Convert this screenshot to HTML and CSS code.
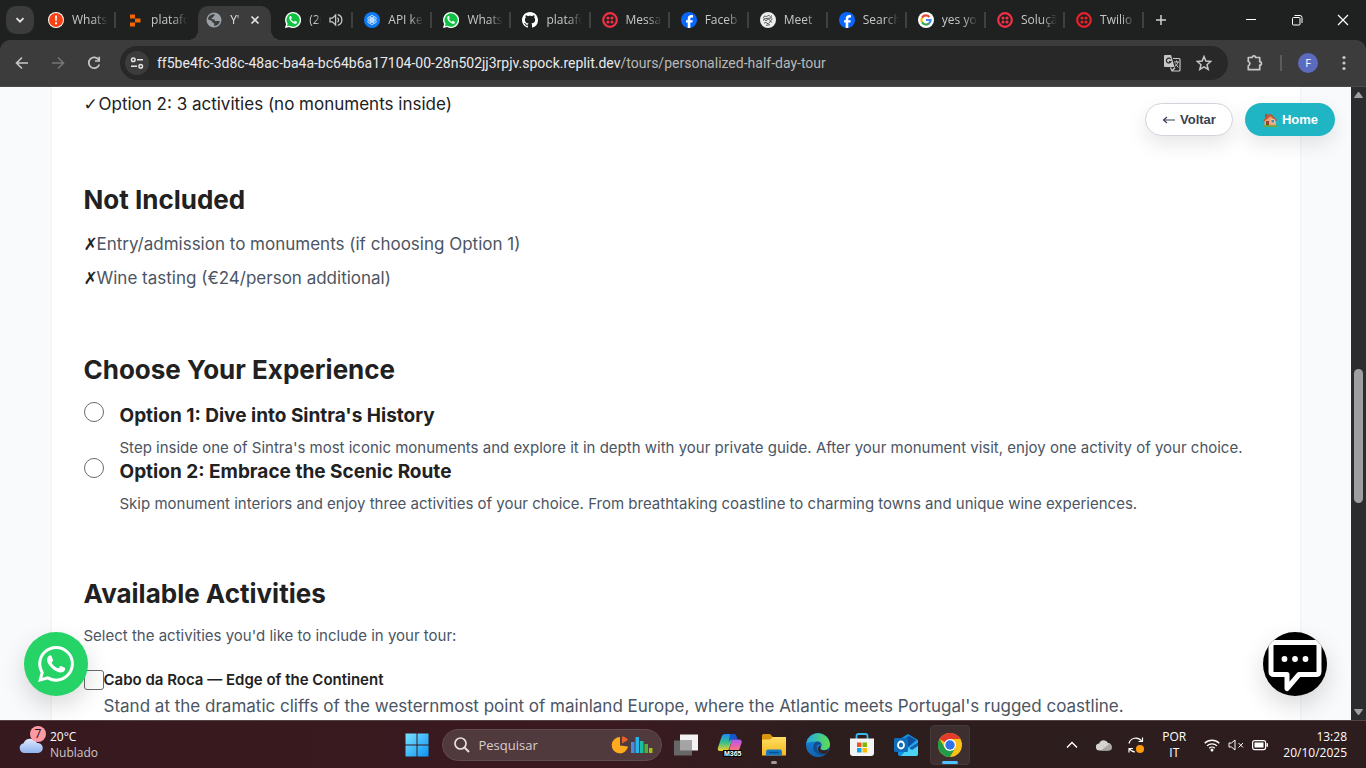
FILE: index.html
```html
<!DOCTYPE html>
<html lang="en">
<head>
<meta charset="utf-8">
<title>Your Sintra Tour</title>
<link rel="stylesheet" href="styles.css">
</head>
<body>
<svg class="defs" aria-hidden="true">
  <defs>
    <symbol id="wa" viewBox="0 0 24 24"><path d="M17.472 14.382c-.297-.149-1.758-.867-2.03-.967-.273-.099-.471-.148-.67.15-.197.297-.767.966-.94 1.164-.173.199-.347.223-.644.075-.297-.15-1.255-.463-2.39-1.475-.883-.788-1.48-1.761-1.653-2.059-.173-.297-.018-.458.13-.606.134-.133.298-.347.446-.52.149-.174.198-.298.298-.497.099-.198.05-.371-.025-.52-.075-.149-.669-1.612-.916-2.207-.242-.579-.487-.5-.669-.51-.173-.008-.371-.01-.57-.01-.198 0-.52.074-.792.372-.272.297-1.04 1.016-1.04 2.479 0 1.462 1.065 2.875 1.213 3.074.149.198 2.096 3.2 5.077 4.487.709.306 1.262.489 1.694.625.712.227 1.36.195 1.871.118.571-.085 1.758-.719 2.006-1.413.248-.694.248-1.289.173-1.413-.074-.124-.272-.198-.57-.347m-5.421 7.403h-.004a9.87 9.87 0 01-5.031-1.378l-.361-.214-3.741.982.998-3.648-.235-.374a9.86 9.86 0 01-1.51-5.26c.001-5.45 4.436-9.884 9.888-9.884 2.64 0 5.122 1.03 6.988 2.898a9.825 9.825 0 012.893 6.994c-.003 5.45-4.437 9.884-9.885 9.884m8.413-18.297A11.815 11.815 0 0012.05 0C5.495 0 .16 5.335.157 11.892c0 2.096.547 4.142 1.588 5.945L.057 24l6.305-1.654a11.882 11.882 0 005.683 1.448h.005c6.554 0 11.89-5.335 11.893-11.893a11.821 11.821 0 00-3.48-8.413z"/></symbol>
    <symbol id="wa-tab" viewBox="0 0 24 24"><path fill="#fff" d="M12 0a12 12 0 11-5.700 22.500L0 24l1.600-6.100A12 12 0 0112 0z"/><path fill="#0dc143" d="M12 2a10 10 0 11-5 18.600L3 21.500l1-3.800A10 10 0 0112 2z"/><path fill="#fff" d="M8 6c-1.500.6-2 2.100-1.500 3.900 1 3.400 4 6.600 7.500 7.700 2 .6 3.600-.2 4-2 .1-.5 0-.9-.4-1.100l-2.300-1.100c-.5-.2-.8 0-1.100.4l-.7.9c-2-.7-3.600-2.200-4.500-4l.8-1c.3-.3.300-.6.200-1L9.200 6.400C9 6 8.600 5.900 8 6z"/></symbol>
    <symbol id="twilio" viewBox="0 0 16 16"><circle cx="8" cy="8" r="6.800" fill="none" stroke="currentColor" stroke-width="2.200"/><g fill="currentColor"><circle cx="6" cy="6" r="1.600"/><circle cx="10" cy="6" r="1.600"/><circle cx="6" cy="10" r="1.600"/><circle cx="10" cy="10" r="1.600"/></g></symbol>
    <symbol id="fb" viewBox="0 0 16 16"><circle cx="8" cy="8" r="8" fill="#0866ff"/><path fill="#fff" d="M6.700 16v-5.400H5V8.200h1.700V7.100c0-2.700 1.200-4 3.800-4 .5 0 1.200.1 1.500.2v2.200h-.9c-1.300 0-1.800.5-1.800 1.700v1h2.500l-.4 2.400H9.300V16z"/></symbol>
    <linearGradient id="win" x1="0" y1="0" x2="1" y2="1"><stop offset="0" stop-color="#7be3ff"/><stop offset="1" stop-color="#0a93f5"/></linearGradient>
    <linearGradient id="cloud" x1="0" y1="0" x2="0" y2="1"><stop offset="0" stop-color="#dce9ff"/><stop offset="1" stop-color="#8fb2ee"/></linearGradient>
    <linearGradient id="folder" x1="0" y1="0" x2="0" y2="1"><stop offset="0" stop-color="#ffdc63"/><stop offset="1" stop-color="#f5b81d"/></linearGradient>
    <linearGradient id="edge1" x1="0" y1="0" x2="1" y2="0"><stop offset="0" stop-color="#23a8e8"/><stop offset="1" stop-color="#5ee04e"/></linearGradient>
    <linearGradient id="edge2" x1="0" y1="0" x2="0" y2="1"><stop offset="0" stop-color="#1a8de0"/><stop offset="1" stop-color="#1161ad"/></linearGradient>
    <linearGradient id="copL" x1="0" y1="0" x2="0" y2="1"><stop offset="0" stop-color="#1b8df2"/><stop offset=".5" stop-color="#39c08b"/><stop offset="1" stop-color="#f7cf2c"/></linearGradient>
    <linearGradient id="copR" x1="0" y1="0" x2="0" y2="1"><stop offset="0" stop-color="#a45cf2"/><stop offset=".5" stop-color="#e35fb7"/><stop offset="1" stop-color="#fb7c5c"/></linearGradient>
  </defs>
</svg>

<header class="browser">
  <div class="tabstrip">
    <button class="tab-search" aria-label="Search tabs"><svg width="12" height="12" viewBox="0 0 12 12"><path d="M2.500 4.200L6 7.700l3.500-3.500" fill="none" stroke="#e3e3e3" stroke-width="1.800"/></svg></button>
    <div class="tabs">
      <div class="tab"><svg class="fav" viewBox="0 0 16 16"><circle cx="8" cy="8" r="8" fill="#fff"/><circle cx="8" cy="8" r="7" fill="#ff4013"/><path d="M7 3.500h2l-.3 5.500H7.300zM7 10.300h2v2H7z" fill="#fff"/></svg><span class="label">Whats</span></div>
      <div class="tab no-sep"><svg class="fav" viewBox="0 0 16 16"><path fill="#f56600" d="M3 2.500h5v4H3.500q-.5 0-.5-.5zM8 6.500h5.500v4H8zM3 10.500h5v4H3.500q-.5 0-.5-.5z"/></svg><span class="label">platafo</span></div>
      <div class="tab active"><svg class="fav" viewBox="0 0 16 16"><circle cx="8" cy="8" r="7.500" fill="#9aa0a6"/><path fill="#3c3c3c" d="M8.200 2.300c1 .5.300 1.600-.5 1.900-.7.300-.4 1.400-1.600 1.500-.9.100-.8 1-.2 1.300 1 .5 2.600.2 3 1.400.3.900 1.200.8 2 .7.800 0 2-.4 3 .2-.5 2.300-2.700 4.500-5.400 4.600-.6-.6-.3-1.800-.2-2.600-.8-.5-2-.7-2.100-1.900C5.800 8.600 3 8 2 7.300 2.200 4.500 5 2 8.200 2.300z"/></svg><span class="label">Y'</span><button class="close" aria-label="Close tab"><svg width="10" height="10" viewBox="0 0 10 10"><path d="M1.500 1.500l7 7m0-7l-7 7" stroke="#e3e3e3" stroke-width="1.600"/></svg></button></div>
      <div class="tab"><svg class="fav"><use href="#wa-tab"/></svg><span class="label short">(20</span><svg class="audio" viewBox="0 0 14 14"><path d="M1 5.200h2.400L6.600 2v10L3.400 8.800H1z" fill="none" stroke="#c7c7c7" stroke-width="1.300"/><path d="M8.500 4.700a3 3 0 010 4.600M8.800 1.700a5.500 5.500 0 010 10.600" fill="none" stroke="#c7c7c7" stroke-width="1.300"/></svg></div>
      <div class="tab"><svg class="fav" viewBox="0 0 16 16"><circle cx="8" cy="8" r="8" fill="#0f7bf5"/><g fill="none" stroke="#d6eaff" stroke-width=".8"><ellipse cx="8" cy="6.300" rx="2" ry="3"/><ellipse cx="8" cy="6.300" rx="2" ry="3" transform="rotate(60 8 8)"/><ellipse cx="8" cy="6.300" rx="2" ry="3" transform="rotate(120 8 8)"/><ellipse cx="8" cy="6.300" rx="2" ry="3" transform="rotate(180 8 8)"/><ellipse cx="8" cy="6.300" rx="2" ry="3" transform="rotate(240 8 8)"/><ellipse cx="8" cy="6.300" rx="2" ry="3" transform="rotate(300 8 8)"/></g></svg><span class="label">API ke</span></div>
      <div class="tab"><svg class="fav"><use href="#wa-tab"/></svg><span class="label">Whats</span></div>
      <div class="tab"><svg class="fav" viewBox="0 0 16 16"><path fill="#fff" d="M8 0C3.580 0 0 3.580 0 8c0 3.540 2.290 6.530 5.470 7.590.4.070.55-.17.55-.38 0-.19-.01-.82-.01-1.490-2.010.37-2.530-.49-2.690-.94-.09-.23-.48-.94-.82-1.130-.28-.15-.68-.52-.01-.53.63-.01 1.080.58 1.230.82.72 1.210 1.870.87 2.330.66.070-.52.28-.87.51-1.070-1.780-.2-3.640-.89-3.640-3.950 0-.87.31-1.590.82-2.150-.08-.2-.36-1.020.080-2.120 0 0 .67-.21 2.200.82.64-.18 1.320-.27 2-.27s1.360.09 2 .27c1.530-1.040 2.200-.82 2.200-.82.44 1.100.16 1.920.08 2.120.51.56.82 1.270.82 2.150 0 3.070-1.870 3.750-3.650 3.950.29.25.54.73.54 1.480 0 1.070-.01 1.930-.01 2.200 0 .21.15.46.55.38A8.010 8.010 0 0016 8c0-4.420-3.580-8-8-8z"/></svg><span class="label">platafo</span></div>
      <div class="tab"><svg class="fav red"><use href="#twilio"/></svg><span class="label">Messa</span></div>
      <div class="tab"><svg class="fav"><use href="#fb"/></svg><span class="label">Faceb</span></div>
      <div class="tab"><svg class="fav" viewBox="0 0 16 16"><circle cx="8" cy="8" r="8" fill="#ececec"/><path d="M3.500 5.800q.5-2.500 2-1.500t2-.3q1.500-1.500 2 0t2.500-.3M3 8.500q1.500-2 2.200-.3t2-.3 2 0 3.300-.9M4 11.200q2-1.500 3 0t2-.5 3-.6M3.500 7l8.500-1.200M6 13.300l4-.6" fill="none" stroke="#444" stroke-width=".9"/></svg><span class="label">Meet</span></div>
      <div class="tab"><svg class="fav"><use href="#fb"/></svg><span class="label">Search</span></div>
      <div class="tab"><svg class="fav" viewBox="0 0 16 16"><circle cx="8" cy="8" r="8" fill="#fff"/><g fill="none" stroke-width="2.200"><path d="M11.400 4.900A4.600 4.600 0 004 5.700" stroke="#ea4335"/><path d="M4 5.700a4.600 4.600 0 000 4.600" stroke="#fbbc05"/><path d="M4 10.300a4.600 4.600 0 007 1.100" stroke="#34a853"/><path d="M11 11.400A4.500 4.500 0 0012.600 8H8" stroke="#4285f4"/></g></svg><span class="label">yes yo</span></div>
      <div class="tab"><svg class="fav red"><use href="#twilio"/></svg><span class="label">Soluçã</span></div>
      <div class="tab"><svg class="fav crimson"><use href="#twilio"/></svg><span class="label">Twilio</span></div>
    </div>
    <button class="newtab" aria-label="New tab"><svg width="12" height="12" viewBox="0 0 12 12"><path d="M6 1v10M1 6h10" stroke="#d0d0d0" stroke-width="1.500"/></svg></button>
    <div class="winctl">
      <button aria-label="Minimize"><svg width="12" height="12" viewBox="0 0 12 12"><path d="M1 5.500h10" stroke="#fff"/></svg></button>
      <button aria-label="Restore"><svg width="12" height="12" viewBox="0 0 12 12"><rect x="1.500" y="3.500" width="7.500" height="7.500" rx="1" fill="none" stroke="#fff"/><path d="M3.500 1.500h5.500a2 2 0 012 2V9" fill="none" stroke="#fff"/></svg></button>
      <button aria-label="Close"><svg width="12" height="12" viewBox="0 0 12 12"><path d="M1 1l10 10M11 1L1 11" stroke="#fff" stroke-width="1.200"/></svg></button>
    </div>
  </div>

  <div class="toolbar">
    <button class="nav" aria-label="Back"><svg width="16" height="16" viewBox="0 0 16 16"><path d="M14 8H3M8 2.500L2.500 8 8 13.500" fill="none" stroke="#c7c7c7" stroke-width="1.600"/></svg></button>
    <button class="nav" aria-label="Forward"><svg width="16" height="16" viewBox="0 0 16 16"><path d="M2 8h11M8 2.500L13.500 8 8 13.500" fill="none" stroke="#757575" stroke-width="1.600"/></svg></button>
    <button class="nav" aria-label="Reload"><svg width="16" height="16" viewBox="0 0 16 16"><path d="M12.800 5A5.400 5.400 0 1013.300 9.500" fill="none" stroke="#c7c7c7" stroke-width="1.700"/><path d="M13.200 1.800V6H9" fill="none" stroke="#c7c7c7" stroke-width="1.700"/></svg></button>
    <div class="omnibox">
      <button class="site" aria-label="Site information"><svg width="14" height="14" viewBox="0 0 14 14"><g fill="none" stroke="#e3e3e3" stroke-width="1.500"><circle cx="3.300" cy="3.800" r="1.800"/><path d="M7 3.800h6M1 10.200h6"/><circle cx="10.700" cy="10.200" r="1.800"/></g></svg></button>
      <div class="url" role="textbox" aria-label="Address" contenteditable="true" spellcheck="false">ff5be4fc-3d8c-48ac-ba4a-bc64b6a17104-00-28n502jj3rpjv.spock.replit.dev<span class="path">/tours/personalized-half-day-tour</span></div>
      <button class="obtn" aria-label="Translate"><svg width="18" height="18" viewBox="0 0 18 18"><path d="M2 1h6l3.500 12H2a1 1 0 01-1-1V2a1 1 0 011-1z" fill="#c7c7c7"/><path d="M7.800 5.200A2.400 2.400 0 108 7.500H6" fill="none" stroke="#282828" stroke-width="1.200"/><path d="M10 4.500h6a1 1 0 011 1V16a1 1 0 01-1 1H9l-1.500-3.500M9 17l3-3.500" fill="none" stroke="#c7c7c7" stroke-width="1.200"/><path d="M11 8h5M13.500 6.500V8m1.500 0c-.5 2-1.500 3-3 4.200M12.300 9.500l3 4" fill="none" stroke="#c7c7c7"/></svg></button>
      <button class="obtn" aria-label="Bookmark"><svg width="16" height="16" viewBox="0 0 16 16"><path d="M8 1.600l1.900 4.500 4.800.4-3.700 3.200 1.200 4.700L8 11.900l-4.200 2.500L5 9.700 1.300 6.500l4.800-.4z" fill="none" stroke="#c7c7c7" stroke-width="1.500"/></svg></button>
    </div>
    <button class="ext" aria-label="Extensions"><svg width="18" height="18" viewBox="0 0 18 18"><path d="M2.300 3.500h3.900a1.700 1.700 0 013.400 0h4.100v4.200a1.700 1.700 0 010 3.400v4.600H2.300v-4a2.200 2.200 0 000-4.200z" fill="none" stroke="#c7c7c7" stroke-width="1.700" stroke-linejoin="round"/></svg></button>
    <span class="divider"></span>
    <button class="avatar" aria-label="Profile">F</button>
    <button class="more" aria-label="Menu"><svg width="4" height="16" viewBox="0 0 4 16" fill="#c7c7c7"><circle cx="2" cy="2.500" r="1.600"/><circle cx="2" cy="8" r="1.600"/><circle cx="2" cy="13.500" r="1.600"/></svg></button>
  </div>
</header>

<div class="viewport">
  <div class="page">
    <main class="card">
      <section>
        <ul class="list included"><li><span class="mark">✓</span>Option 2: 3 activities (no monuments inside)</li></ul>
      </section>
      <section>
        <h2>Not Included</h2>
        <ul class="list">
          <li><span class="mark x">✗</span>Entry/admission to monuments (if choosing Option 1)</li>
          <li><span class="mark x">✗</span>Wine tasting (€24/person additional)</li>
        </ul>
      </section>
      <section>
        <h2>Choose Your Experience</h2>
        <div class="option">
          <input type="radio" name="experience" id="opt1">
          <label for="opt1"><span class="title">Option 1: Dive into Sintra's History</span><span class="desc">Step inside one of Sintra's most iconic monuments and explore it in depth with your private guide. After your monument visit, enjoy one activity of your choice.</span></label>
        </div>
        <div class="option">
          <input type="radio" name="experience" id="opt2">
          <label for="opt2"><span class="title">Option 2: Embrace the Scenic Route</span><span class="desc">Skip monument interiors and enjoy three activities of your choice. From breathtaking coastline to charming towns and unique wine experiences.</span></label>
        </div>
      </section>
      <section>
        <h2>Available Activities</h2>
        <p class="hint">Select the activities you'd like to include in your tour:</p>
        <div class="activity">
          <input type="checkbox" id="cabo">
          <label for="cabo"><span class="name">Cabo da Roca — Edge of the Continent</span><span class="about">Stand at the dramatic cliffs of the westernmost point of mainland Europe, where the Atlantic meets Portugal's rugged coastline.</span></label>
        </div>
      </section>
    </main>

    <div class="quick">
      <button class="pill back"><svg width="14" height="12" viewBox="0 0 14 12"><path d="M13 6H1.500M5 3L1.500 6 5 9" fill="none" stroke="#374151" stroke-width="1.200"/></svg>Voltar</button>
      <button class="pill home"><svg width="16" height="16" viewBox="0 0 16 16"><path d="M3 2h2.500v4H3z" fill="#a5563a"/><path d="M2.500 7.500L9 3l5 5v6H2.500z" fill="#f0a268"/><path d="M1 8.500L7 2l2 0 6 6-1 1.200-5.500-5L2 9.500z" fill="#c4573a"/><path d="M4 9h3v5H4z" fill="#8c4a30"/><path d="M9 7.500h3.500V11H9z" fill="#3d86c9" stroke="#f7dcc0" stroke-width=".7"/><path d="M1 13.200h14V15H1z" fill="#6ba842"/></svg>Home</button>
    </div>
    <button class="fab whatsapp" aria-label="WhatsApp"><svg width="36" height="36"><use href="#wa"/></svg></button>
    <button class="fab chat" aria-label="Chat"><svg width="64" height="64" viewBox="0 0 64 64"><path d="M11 10.500h42q3 0 3 3v26q0 3-3 3H36L24 56.500v-14H11q-3 0-3-3v-26q0-3 3-3z" fill="none" stroke="#fff" stroke-width="5" stroke-linejoin="round"/><g fill="#fff"><circle cx="21.500" cy="27" r="2.900"/><circle cx="32" cy="27" r="2.900"/><circle cx="42.500" cy="27" r="2.900"/></g></svg></button>
  </div>
  <div class="scrollbar" aria-hidden="true">
    <svg width="9" height="8" viewBox="0 0 9 8"><path d="M4.500 1L8.500 6.500h-8z" fill="#9f9f9f" stroke="#9f9f9f" stroke-linejoin="round"/></svg>
    <span class="before"></span><span class="thumb"></span><span class="after"></span>
    <svg width="9" height="8" viewBox="0 0 9 8"><path d="M4.500 7L8.500 1.500h-8z" fill="#9f9f9f" stroke="#9f9f9f" stroke-linejoin="round"/></svg>
  </div>
</div>

<footer class="taskbar">
  <div class="weather">
    <span class="wicon"><svg width="26" height="18" viewBox="0 0 26 18"><path d="M6 17a5 5 0 01-.5-9.800A7.500 7.500 0 0119 7a5 5 0 011.500 10z" fill="url(#cloud)"/></svg><span class="badge">7</span></span>
    <span class="wtext"><span>20°C</span><span class="dim">Nublado</span></span>
  </div>
  <div class="apps">
    <button class="app" aria-label="Start"><svg width="24" height="24" viewBox="0 0 24 24" fill="url(#win)"><path d="M.5.5h11v11H.5zM12.500.5h11v11h-11zM.5 12.500h11v11H.5zM12.500 12.500h11v11h-11z"/></svg></button>
    <div class="search">
      <svg width="18" height="18" viewBox="0 0 18 18"><circle cx="7.500" cy="7.500" r="5.500" fill="none" stroke="#e8e0e0" stroke-width="1.700"/><path d="M11.500 11.500l4.500 4.500" stroke="#e8e0e0" stroke-width="2"/></svg>
      <input type="text" placeholder="Pesquisar" aria-label="Pesquisar">
      <svg width="42" height="20" viewBox="0 0 42 20"><path d="M9 2v8.500l8 1A8.200 8.200 0 119 2z" fill="#ffa91f"/><path d="M11 8.500V1.500q4 0 6 3.500z" fill="#e2622b"/><path d="M20 7h3.500v11H20z" fill="#3f8ee8"/><path d="M24.500 2H28v16h-3.500z" fill="#27b4ea"/><path d="M29 6h3.500v12H29z" fill="#1bbfa0"/><path d="M33.500 9H37v9h-3.500z" fill="#4bb43d"/><path d="M38 13h3.500v5H38z" fill="#a3bf17"/></svg>
    </div>
    <button class="app" aria-label="Task view"><svg width="24" height="24" viewBox="0 0 24 24"><path d="M6 1.500h18v16H6z" fill="#f2f2f2"/><path d="M0 7.500h18v15H0z" fill="#666" /><path d="M6 7.500h12v10H6z" fill="#a4a4a4"/></svg></button>
    <button class="app" aria-label="Microsoft 365 Copilot"><svg width="26" height="26" viewBox="0 0 26 26"><path d="M8 2h9l-5 15q-.7 2-3 2H3q-3 0-2-3.500L4.500 5Q5.500 2 8 2z" fill="url(#copL)"/><path d="M13 2h4q2 0 2.500 2l1 3.500H15q-2.500 0-3.300 2.500z" fill="#1557c8"/><path d="M15.500 7.500h6.500q3.500 0 2.500 3.500l-2 6q-.7 2-3 2h-7.500l2.500-9.500q.4-1.500 1-2z" fill="url(#copR)"/><path d="M6 18h19v7H6z" fill="#050505"/><text x="7" y="24" class="m365">M365</text></svg></button>
    <button class="app dot" aria-label="File Explorer"><svg width="24" height="24" viewBox="0 0 24 24"><path d="M0 2.500Q0 1 1.500 1H8l3 3h4v4H0z" fill="#d9950b"/><path d="M0 6.500h8L11 4h13v18.500H0z" fill="url(#folder)"/><path d="M4 22.500v-4q0-2 2-2h12q2 0 2 2v4z" fill="#1479c9"/><path d="M7 19.500h10" stroke="#0a4f91" stroke-width="1.500"/></svg></button>
    <button class="app" aria-label="Edge"><svg width="24" height="24" viewBox="0 0 24 24"><circle cx="12" cy="12" r="12" fill="url(#edge2)"/><path d="M.3 10A12 12 0 0124 11c0 4-3 6-6 6-3.500 0-4.500-1.600-3-3.200 1.500-2 .2-5.300-4-5.300-4.500 0-8 1-10.700 1.500z" fill="url(#edge1)"/><path d="M11 8.500c-4 1.500-5 6.500-2 10.500 3 3.700 8 4.500 12 .5-3 1.500-7 1.200-9-1.500-2-2.600-1.500-5.500.3-6.500 2-.6 3 .3 2.700 2.300 1.500-2.800-.5-5.300-4-5.300z" fill="#124c91"/><path d="M15 14c-1.700 1.800-.2 3.300 3 3.300 2 0 4-.8 5-2.300l-2 5c-3 1.500-7 .5-8.500-2-1-2-.5-4.500 1.500-5.500z" fill="#33231f"/></svg></button>
    <button class="app" aria-label="Microsoft Store"><svg width="24" height="24" viewBox="0 0 24 24"><path d="M6.500 7V3q0-2 2-2h7q2 0 2 2v4" fill="none" stroke="#39b8ef" stroke-width="1.800"/><path d="M0 5.500h24V20q0 3-3 3H3q-3 0-3-3z" fill="#f3f3f3"/><path d="M7 9.500h4.500V14H7z" fill="#f25022"/><path d="M12.500 9.500H17V14h-4.500z" fill="#7fba00"/><path d="M7 15h4.500v4.500H7z" fill="#00a4ef"/><path d="M12.500 15H17v4.500h-4.500z" fill="#ffb900"/></svg></button>
    <button class="app" aria-label="Outlook"><svg width="24" height="24" viewBox="0 0 24 24"><path d="M4 7l10-6 10 6v14q0 2-2 2H6q-2 0-2-2z" fill="#1490df"/><path d="M8 7l7-4 7 4-8 7z" fill="#0d4f9d"/><path d="M14 15l10-7v13q0 2-2 2H7z" fill="#4bd3f6"/><path d="M15 15l9-6v4l-6 4z" fill="#0e65b8"/><rect y="5" width="14" height="14" rx="1.500" fill="#0f6cbd"/><ellipse cx="7" cy="12" rx="3" ry="3.500" fill="none" stroke="#fff" stroke-width="1.800"/></svg></button>
    <button class="app current" aria-label="Chrome"><svg width="24" height="24" viewBox="0 0 24 24"><circle cx="12" cy="12" r="12" fill="#fbc116"/><path d="M12 12L1.600 6A12 12 0 0122.400 6H12z" fill="#e33b2e"/><path d="M1.600 6A12 12 0 0012 24l5.200-9L12 12 6.800 15z" fill="#229c4a"/><circle cx="12" cy="12" r="6" fill="#fff"/><circle cx="12" cy="12" r="4.700" fill="#2f72e8"/></svg></button>
  </div>
  <div class="tray">
    <button class="ticon" aria-label="Hidden icons"><svg width="12" height="12" viewBox="0 0 12 12"><path d="M1 8.500l5-5 5 5" fill="none" stroke="#fff" stroke-width="1.400"/></svg></button>
    <button class="ticon" aria-label="OneDrive"><svg width="16" height="12" viewBox="0 0 16 12"><path d="M3.500 11.500a3.500 3.500 0 01-.3-7A4.800 4.800 0 0112 4a3.800 3.800 0 01.5 7.500z" fill="#d6d2d2"/><path d="M5 11.500l8.500-6.800q2.500 1 2.500 3.500a3.300 3.300 0 01-3.500 3.300z" fill="#a9a5a5"/></svg></button>
    <button class="ticon" aria-label="Update"><svg width="18" height="18" viewBox="0 0 18 18"><path d="M2 7.500A7 7 0 0114.500 5M15.500 1.500v4h-4M2 16.500v-4h4M2.500 12.500Q4 15.500 8 16" fill="none" stroke="#fff" stroke-width="1.200"/><circle cx="13" cy="13" r="4" fill="#ff9a0b"/></svg></button>
    <button class="lang"><span>POR</span><span>IT</span></button>
    <button class="status" aria-label="Network, sound, battery"><svg width="16" height="14" viewBox="0 0 16 14"><g fill="none" stroke="#fff" stroke-width="1.300"><path d="M.7 5.300a10.300 10.300 0 0114.600 0M3 7.900a7 7 0 0110 0M5.200 10.300a4 4 0 015.600 0"/></g><circle cx="8" cy="12" r="1.500" fill="#fff"/></svg><svg width="16" height="14" viewBox="0 0 16 14"><path d="M1 5h2.500L7 2v10L3.500 9H1z" fill="none" stroke="#fff"/><path d="M10.500 5l4.500 4.500M15 5l-4.500 4.500" stroke="#fff"/></svg><svg width="16" height="12" viewBox="0 0 16 12"><rect x=".6" y="1.600" width="13" height="9" rx="2" fill="none" stroke="#fff" stroke-width="1.200"/><path d="M2.500 3.500h9v5h-9zM14.500 4.300H16v3.500h-1.500z" fill="#fff"/></svg></button>
    <button class="clock"><span>13:28</span><span>20/10/2025</span></button>
  </div>
</footer>
</body>
</html>
```
FILE: styles.css
```css
* { box-sizing: border-box; }
html, body { height: 100%; }
body {
  margin: 0;
  display: flex;
  flex-direction: column;
  overflow: hidden;
  font-family: "Open Sans", "Noto Sans", sans-serif;
  font-size: 12px;
}
button { border: 0; padding: 0; margin: 0; background: none; font: inherit; color: inherit; display: flex; align-items: center; justify-content: center; flex: none; }
svg { display: block; flex: none; }
.defs { position: absolute; width: 0; height: 0; }

/* Browser chrome */
.browser { background: #1f2020; flex: none; }
.tabstrip { display: flex; align-items: center; height: 40px; }
.tab-search { width: 28px; height: 28px; margin-left: 6px; margin-right: 4px; border-radius: 10px; background: #3c3c3c; }
.tabs { display: flex; flex: 0 1 1106px; min-width: 0; height: 40px; align-items: center; }
.tab { position: relative; z-index: 0; flex: 1 1 0; min-width: 0; display: flex; align-items: center; gap: 8px; padding-left: 11px; height: 40px; color: #c7c7c7; }
.tab:first-child { padding-left: 10px; }
.tab::after { content: ""; position: absolute; right: 0; top: 12px; width: 2px; height: 16px; background: #3f4040; }
.tab.no-sep::after { display: none; }
.fav { width: 16px; height: 16px; }
.red { color: #f22f46; }
.crimson { color: #e8222a; }
.label { width: 36px; overflow: hidden; white-space: nowrap; line-height: 16px; -webkit-mask-image: linear-gradient(90deg, #000 60%, transparent); mask-image: linear-gradient(90deg, #000 60%, transparent); }
.tab.active { color: #e3e3e3; }
.tab.active .label { width: 12px; }
.tab.active::before { content: ""; position: absolute; z-index: -1; left: 3px; right: 3px; top: 6px; bottom: 0; border-radius: 10px 10px 0 0; background: #3c3c3c; }
.tab.active::after { z-index: -1; top: auto; width: auto; left: -7px; right: -7px; bottom: 0; height: 10px; background: radial-gradient(circle at 0 0, transparent 10px, #3c3c3c 10px) left / 10px 10px no-repeat, radial-gradient(circle at 100% 0, transparent 10px, #3c3c3c 10px) right / 10px 10px no-repeat; }
.label.short { width: 12px; }
.audio { width: 14px; height: 14px; }
.newtab { width: 28px; height: 28px; margin-left: 3px; }
.winctl { margin-left: auto; display: flex; gap: 34px; padding-right: 17px; }

.toolbar { display: flex; align-items: center; height: 47px; padding: 6px 20px 7px 14px; background: #3c3c3c; border-radius: 10px 10px 0 0; border-bottom: 1px solid #4a4a4a; }
.nav { width: 16px; height: 16px; margin-right: 20px; }
.omnibox { flex: 1; min-width: 0; display: flex; align-items: center; height: 34px; margin-left: -2px; padding: 0 16px 0 5px; border-radius: 17px; background: #282828; }
.site { width: 24px; height: 24px; border-radius: 50%; background: #3c3c3c; }
.url { flex: 1; min-width: 0; margin-left: 8px; font-family: Roboto, "Open Sans", sans-serif; font-size: 14px; line-height: 20px; color: #e8eaed; white-space: nowrap; overflow: hidden; outline: 0; }
.path { color: #b8b8b8; }
.obtn { margin-left: 15px; }
.ext { margin-left: 18px; }
.divider { width: 2px; height: 16px; margin: 0 16px; background: #5c5c5c; }
.avatar { width: 20px; height: 20px; border-radius: 50%; background: #5c6bc0; color: #fff; font-size: 11px; }
.more { margin-left: 24px; }

/* Page */
.viewport { flex: 1; min-height: 0; display: flex; }
.page { position: relative; flex: 1; min-width: 0; overflow: hidden; background: #f9fafb; font-family: Inter, "Open Sans", sans-serif; color: #212121; }
.card { max-width: 1248px; min-height: 100%; margin: 0 auto; padding: 5px 32px 0; background: #fff; box-shadow: 0 0 2px rgba(0, 0, 0, .08); }
section { margin-bottom: 64px; }
h2 { margin: 0 0 16px; font-size: 26px; line-height: 32px; font-weight: 700; }
.list { list-style: none; margin: 0; padding: 0; display: grid; gap: 10px; font-size: 17px; line-height: 24px; color: #4b5563; }
.included { color: #212121; padding-bottom: 4px; }
.list li { display: flex; }
.mark { color: #212121; font-family: "DejaVu Sans", sans-serif; width: 15px; }
.mark.x { width: 13px; }
.option { display: flex; gap: 16px; }
.option label { display: grid; gap: 8px; }
.title { font-size: 19px; line-height: 28px; font-weight: 700; }
.desc { font-size: 15px; line-height: 20px; color: #4b5563; }
.option input, .activity input { flex: none; appearance: none; width: 20px; height: 20px; margin: 0; border: 1px solid #6b6b6b; background: #fff; }
.option input { border-radius: 50%; }
.activity input { border-radius: 3px; }
.hint { margin: 0 0 24px; font-size: 15px; line-height: 20px; color: #4b5563; }
.activity { display: flex; }
.activity label { display: grid; gap: 4px; }
.name { font-size: 15px; line-height: 20px; font-weight: 600; }
.about { font-size: 17px; line-height: 24px; color: #4b5563; }

.quick { position: absolute; top: 16px; right: 16px; display: flex; gap: 12px; }
.pill { height: 33px; padding: 0 16px; gap: 4px; border-radius: 17px; font: 700 13px/16px "Liberation Sans", Arial, sans-serif; box-shadow: 0 8px 20px rgba(0, 0, 0, .1); }
.back { background: #fff; border: 1px solid #d1d5db; color: #374151; }
.home { padding: 0 17px; background: #20b5c4; color: #fff; }
.fab { position: absolute; bottom: 24px; width: 64px; height: 64px; border-radius: 50%; box-shadow: 0 10px 24px rgba(0, 0, 0, .15); }
.whatsapp { left: 24px; background: #25d366; fill: #fff; }
.chat { right: 24px; background: #000; overflow: hidden; }

.scrollbar { flex: none; width: 15px; padding: 4px 0; display: flex; flex-direction: column; align-items: center; background: #2c2c2c; }
.before { flex: 266; }
.thumb { flex: 133; width: 9px; border-radius: 5px; background: #9f9f9f; }
.after { flex: 202; }

/* Taskbar */
.taskbar { flex: none; height: 48px; display: grid; grid-template-columns: 1fr auto 1fr; align-items: center; background: linear-gradient(90deg, #36191e 0, #3a1a20 45%, #2d1e1e 60%, #2d1d1e 100%); border-top: 1px solid #574346; color: #fff; }
.weather { display: flex; align-items: center; gap: 6px; padding-left: 18px; }
.wicon { position: relative; }
.badge { position: absolute; right: -2px; top: -10px; width: 16px; height: 16px; border-radius: 50%; background: #ff99a4; color: #111; text-align: center; line-height: 16px; }
.wtext { display: grid; line-height: 16px; }
.dim { color: #cfc5c6; }
.apps { display: flex; align-items: center; }
.app { position: relative; width: 44px; height: 40px; }
.current { width: 40px; margin: 0 2px; border-radius: 4px; background: #3d2f2f; border: 1px solid #463939; }
.dot::after, .current::after { content: ""; position: absolute; bottom: 1px; width: 6px; height: 3px; border-radius: 2px; background: #a39a9a; }
.current::after { width: 16px; bottom: 0; background: #4cc2ff; }
.m365 { font: 700 7px "Liberation Sans", sans-serif; fill: #fff; }
.search { width: 220px; height: 32px; margin: 0 2px 0 3px; padding: 0 8px 0 10px; display: flex; align-items: center; gap: 8px; border-radius: 16px; background: #503a3e; border: 1px solid #604b4e; }
.search input { flex: 1; min-width: 0; border: 0; padding: 0; background: none; outline: 0; color: #fff; font: 13px/20px "Open Sans", sans-serif; }
.search input::placeholder { color: #d8cfd0; opacity: 1; }
.tray { display: flex; align-items: center; justify-content: flex-end; padding-right: 19px; }
.ticon { width: 32px; height: 32px; }
.lang { width: 44px; display: grid; line-height: 16px; justify-items: center; }
.status { display: flex; gap: 8px; margin-left: 8px; }
.clock { display: grid; justify-items: end; line-height: 16px; margin-left: 15px; }
```
